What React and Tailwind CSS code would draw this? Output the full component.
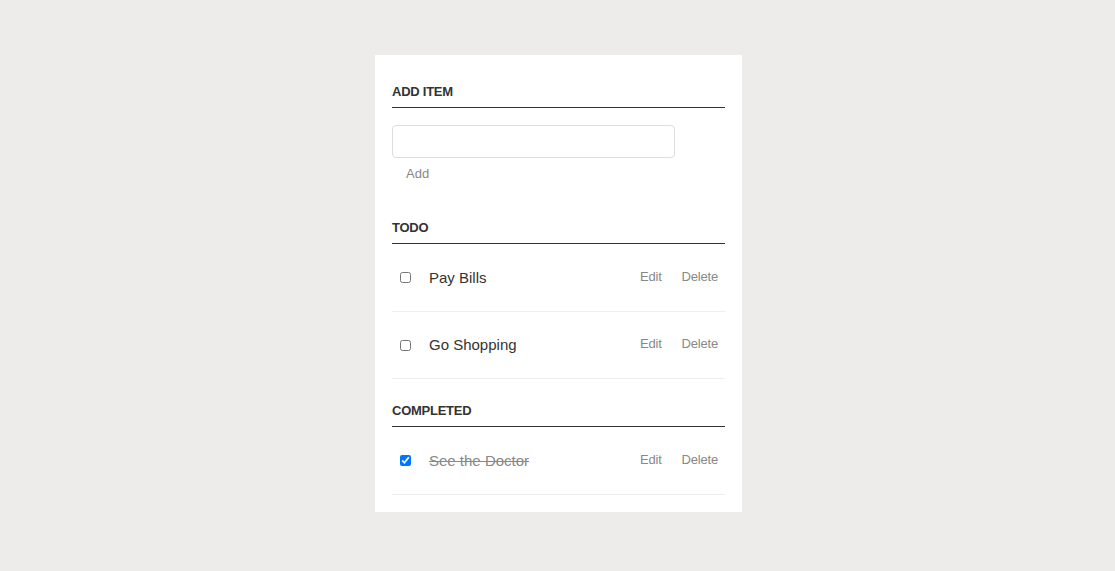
import { useState } from "react";

const font = { fontFamily: '"Liberation Sans", Arial, sans-serif' };

function Heading({ children }) {
    return (
        <h3 className="text-[13px] leading-4 font-bold tracking-[-0.25px] text-[#333] uppercase pt-px pb-[7px] border-b border-[#333]">
            {children}
        </h3>
    );
}

function TaskRow({ task, onToggle }) {
    return (
        <li className="flex items-center h-[67.5px] border-b border-[#eee]">
            <input
                type="checkbox"
                checked={task.done}
                onChange={onToggle}
                className="ml-2 mt-px w-[11px] h-[11px] m-0"
            />
            <span
                className={
                    "ml-[18px] mt-px text-[15px] leading-5 " +
                    (task.done ? "text-[#888] line-through" : "text-[#333]")
                }
            >
                {task.title}
            </span>
            <div className="ml-auto flex items-center gap-5 mr-[7px] -mt-px text-[13px] leading-4 tracking-[-0.2px] text-[#888]">
                <button>Edit</button>
                <button>Delete</button>
            </div>
        </li>
    );
}

export default function App() {
    const [tasks, setTasks] = useState([
        { id: 1, title: "Pay Bills", done: false },
        { id: 2, title: "Go Shopping", done: false },
        { id: 3, title: "See the Doctor", done: true },
    ]);

    const toggle = (id) =>
        setTasks(tasks.map((t) => (t.id === id ? { ...t, done: !t.done } : t)));

    return (
        <div className="min-h-screen bg-[#edecea] pt-[55px]" style={font}>
            <div className="w-[367px] ml-[375px] bg-white px-[17px] pt-[28px] pb-[17px]">
                {/* Add item */}
                <Heading>Add Item</Heading>
                <input
                    type="text"
                    className="block mt-[17px] w-[283px] h-[33px] border border-[#ddd] rounded-[4px] px-2 text-[15px] outline-none"
                />
                <button className="block ml-[14px] mt-[8px] text-[13px] leading-4 text-[#888]">Add</button>

                {/* Todo */}
                <div className="mt-[37px]">
                    <Heading>Todo</Heading>
                    <ul>
                        {tasks.filter((t) => !t.done).map((t) => (
                            <TaskRow key={t.id} task={t} onToggle={() => toggle(t.id)} />
                        ))}
                    </ul>
                </div>

                {/* Completed */}
                <div className="mt-[23px]">
                    <Heading>Completed</Heading>
                    <ul>
                        {tasks.filter((t) => t.done).map((t) => (
                            <TaskRow key={t.id} task={t} onToggle={() => toggle(t.id)} />
                        ))}
                    </ul>
                </div>
            </div>
        </div>
    );
}
